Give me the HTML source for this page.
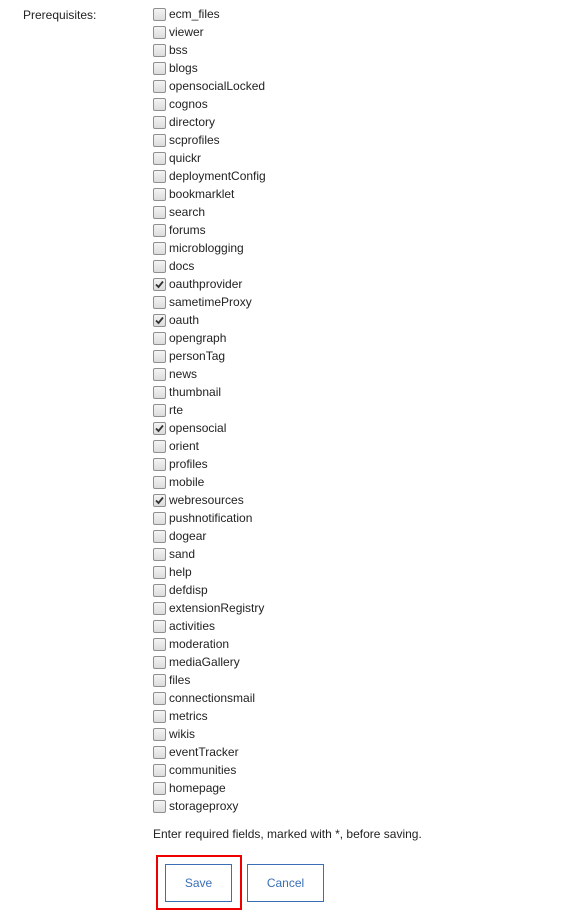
<!DOCTYPE html>
<html><head><style>
body{margin:0;width:564px;height:922px;background:#fff;font-family:"Liberation Sans",Arial,sans-serif;font-size:12px;color:#222;position:relative;overflow:hidden}
.lbl{position:absolute;left:23px;top:7px;line-height:16px}
.row{position:absolute;left:153px;height:18px;line-height:16px;white-space:nowrap}
.cb{position:absolute;left:0;top:2px;width:11px;height:11px;border:1px solid #8f8f8f;border-radius:2px;background:linear-gradient(#f4f4f4,#dcdcdc)}
.cb svg{position:absolute;left:0;top:0}
.t{position:absolute;left:16px;top:0}
.note{position:absolute;left:153px;top:826px;line-height:16px}
.red{position:absolute;left:156px;top:855px;width:82px;height:51px;border:2px solid #e00}
.btn{position:absolute;top:864px;height:36px;border:1px solid #3a6fb5;color:#3a6fb5;text-align:center;line-height:36px;font-size:12px}
</style></head><body>
<div class="lbl">Prerequisites:</div>
<div id="list"></div>
<div class="note">Enter required fields, marked with *, before saving.</div>
<div class="red"></div>
<div class="btn" style="left:165px;width:65px">Save</div>
<div class="btn" style="left:247px;width:75px">Cancel</div>
<script>
var items=["ecm_files","viewer","bss","blogs","opensocialLocked","cognos","directory","scprofiles","quickr","deploymentConfig","bookmarklet","search","forums","microblogging","docs","oauthprovider","sametimeProxy","oauth","opengraph","personTag","news","thumbnail","rte","opensocial","orient","profiles","mobile","webresources","pushnotification","dogear","sand","help","defdisp","extensionRegistry","activities","moderation","mediaGallery","files","connectionsmail","metrics","wikis","eventTracker","communities","homepage","storageproxy"];
var checked={oauthprovider:1,oauth:1,opensocial:1,webresources:1};
var h="";
items.forEach(function(n,i){
var chk=checked[n]?'<svg width="11" height="11" viewBox="0 0 11 11"><path d="M2 5.5 L4.5 8 L9 2.5" fill="none" stroke="#333" stroke-width="1.8"/></svg>':'';
h+='<div class="row" style="top:'+(6+i*18)+'px"><span class="cb">'+chk+'</span><span class="t">'+n+'</span></div>';
});
document.getElementById("list").innerHTML=h;
</script>
</body></html>
